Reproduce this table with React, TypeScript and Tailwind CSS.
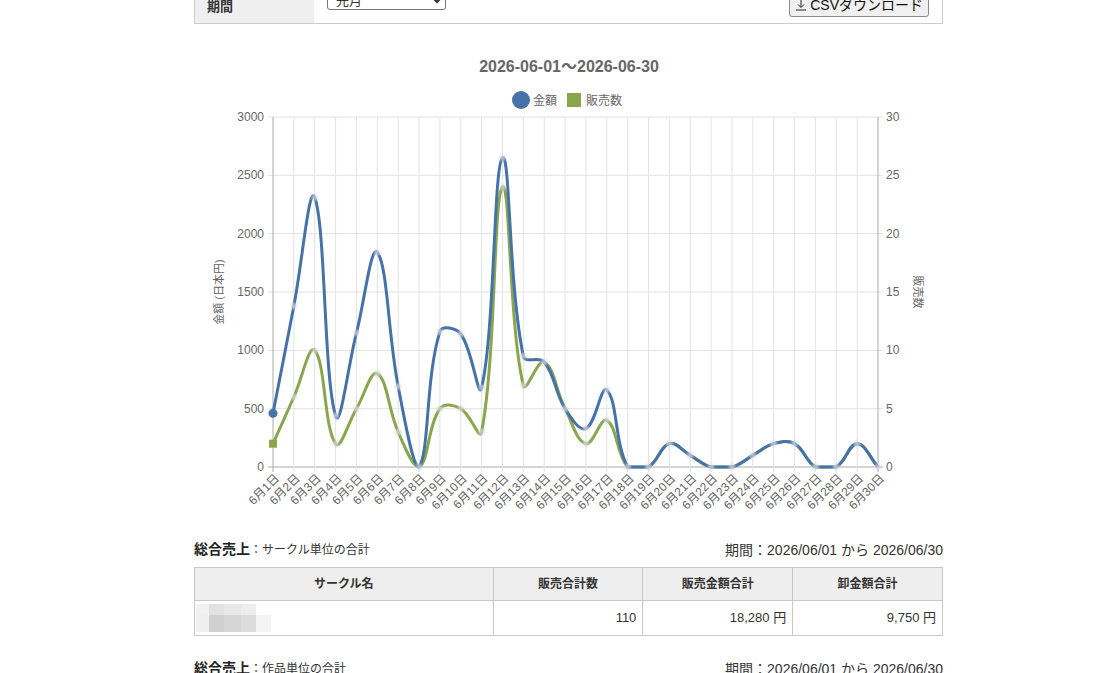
import React from "react";

const amount = [460, 1380, 2310, 440, 1150, 1840, 690, 0, 1160, 1140, 680, 2650, 950, 900, 500, 330, 660, 0, 0, 200, 100, 0, 0, 100, 200, 200, 0, 0, 200, 0];
const count = [2, 6, 10, 2, 5, 8, 3, 0, 5, 5, 3, 24, 7, 9, 5, 2, 4, 0, 0, 2, 1, 0, 0, 1, 2, 2, 0, 0, 2, 0];

// chart area in page coordinates
const LEFT = 273;
const RIGHT = 878;
const TOP = 117;
const BOTTOM = 467;
const step = (RIGHT - LEFT) / 29;

type Pt = { x: number; y: number };

const xAt = (i: number) => LEFT + i * step;

function splinePath(pts: Pt[], t = 0.4) {
  const clampY = (v: number) => Math.min(BOTTOM, Math.max(TOP, v));
  const clampX = (v: number) => Math.min(RIGHT, Math.max(LEFT, v));
  const cps = pts.map((cur, i) => {
    const prev = pts[i - 1] ?? cur;
    const next = pts[i + 1] ?? cur;
    const d01 = Math.hypot(cur.x - prev.x, cur.y - prev.y);
    const d12 = Math.hypot(next.x - cur.x, next.y - cur.y);
    let s01 = d01 / (d01 + d12);
    let s12 = d12 / (d01 + d12);
    if (isNaN(s01)) s01 = 0;
    if (isNaN(s12)) s12 = 0;
    const fa = t * s01;
    const fb = t * s12;
    return {
      p: { x: clampX(cur.x - fa * (next.x - prev.x)), y: clampY(cur.y - fa * (next.y - prev.y)) },
      n: { x: clampX(cur.x + fb * (next.x - prev.x)), y: clampY(cur.y + fb * (next.y - prev.y)) },
    };
  });
  let d = `M${pts[0].x},${pts[0].y}`;
  for (let i = 1; i < pts.length; i++) {
    const a = cps[i - 1].n;
    const b = cps[i].p;
    d += ` C${a.x},${a.y} ${b.x},${b.y} ${pts[i].x},${pts[i].y}`;
  }
  return d;
}

const amountPts = amount.map((v, i) => ({ x: xAt(i), y: BOTTOM - (v / 3000) * (BOTTOM - TOP) }));
const countPts = count.map((v, i) => ({ x: xAt(i), y: BOTTOM - (v / 30) * (BOTTOM - TOP) }));

const font = '"Liberation Sans", "Noto Sans CJK JP", sans-serif';

function SalesChart() {
  const ticks = [0, 500, 1000, 1500, 2000, 2500, 3000];
  return (
    <svg width={749} height={510} viewBox="194 24 749 510" style={{ fontFamily: font }} className="block">
      <defs>
        <filter id="soft" x="-1" y="-1" width="3" height="3">
          <feGaussianBlur stdDeviation="0.9" />
        </filter>
      </defs>
      <text x={569} y={72} textAnchor="middle" fontSize={16} fontWeight="bold" fill="#666">
        2026-06-01〜2026-06-30
      </text>

      {/* legend */}
      <circle cx={521} cy={100} r={9} fill="#4572A7" />
      <text x={533} y={104.5} fontSize={12} fill="#666">金額</text>
      <rect x={567} y={93} width={14} height={14} fill="#89A54E" />
      <text x={586} y={104.5} fontSize={12} fill="#666">販売数</text>

      {/* grid */}
      {ticks.map((v, i) => {
        const y = BOTTOM - (v / 3000) * (BOTTOM - TOP);
        return (
          <g key={v}>
            <line x1={LEFT - 5} x2={RIGHT + 5} y1={y} y2={y} stroke={i === 0 ? "#aaa" : "#e3e3e3"} />
            <text x={264} y={y + 4} textAnchor="end" fontSize={12} fill="#666">{v}</text>
            <text x={886} y={y + 4} fontSize={12} fill="#666">{v / 100}</text>
          </g>
        );
      })}
      {amount.map((_, i) => (
        <line key={i} x1={xAt(i)} x2={xAt(i)} y1={TOP} y2={BOTTOM + 5} stroke={i === 0 || i === 29 ? "#aaa" : "#e3e3e3"} />
      ))}

      <text transform="translate(223,292) rotate(-90)" textAnchor="middle" fontSize={11} fill="#666">
        金額 (日本円)
      </text>
      <text transform="translate(914,292) rotate(90)" textAnchor="middle" fontSize={11} fill="#666">
        販売数
      </text>

      {/* x labels */}
      {amount.map((_, i) => (
        <text
          key={i}
          transform={`translate(${xAt(i) + 4},${BOTTOM + 9}) rotate(-45)`}
          textAnchor="end"
          fontSize={12}
          fill="#666"
          dy="0.35em"
        >
          6月{i + 1}日
        </text>
      ))}

      {/* lines */}
      <path d={splinePath(countPts)} fill="none" stroke="#89A54E" strokeWidth={3} />
      <path d={splinePath(amountPts)} fill="none" stroke="#4572A7" strokeWidth={3} />

      {/* faint markers */}
      <g filter="url(#soft)" opacity={0.7}>
        {countPts.slice(1).map((p, i) => (
          <circle key={"c" + i} cx={p.x} cy={p.y} r={3.2} fill="#d8d8e0" />
        ))}
        {amountPts.slice(1).map((p, i) => (
          <circle key={"a" + i} cx={p.x} cy={p.y} r={3.2} fill="#d8d8e0" />
        ))}
      </g>
      <rect x={LEFT - 4} y={countPts[0].y - 4} width={8} height={8} fill="#89A54E" />
      <circle cx={LEFT} cy={amountPts[0].y} r={4.5} fill="#4572A7" />
    </svg>
  );
}

function DownloadIcon() {
  return (
    <svg width="12" height="12" viewBox="0 0 12 12" fill="none" stroke="#222" strokeWidth="1">
      <path d="M6 1v7M3 5.5l3 3 3-3M1 11h10" />
    </svg>
  );
}

function Blurred() {
  return (
    <div className="flex flex-col">
      <div className="flex h-[11px]">
        <div className="w-[13px] bg-[#f1f1f1]" />
        <div className="w-[15px] bg-[#e1e1e1]" />
        <div className="w-[17px] bg-[#e8e8e8]" />
        <div className="w-[15px] bg-[#ededed]" />
      </div>
      <div className="flex h-[17px]">
        <div className="w-[13px] bg-[#efefef]" />
        <div className="w-[15px] bg-[#d0d0d0]" />
        <div className="w-[17px] bg-[#d6d6d6]" />
        <div className="w-[15px] bg-[#dcdcdc]" />
        <div className="w-[15px] bg-[#f3f3f3]" />
      </div>
    </div>
  );
}

function SectionHeading({ sub }: { sub: string }) {
  return (
    <div className="flex items-end justify-between leading-[20px] text-[#333]">
      <div>
        <span className="text-[14px] font-bold text-[#222]">総合売上</span>
        <span className="text-[12px]">：{sub}</span>
      </div>
      <div className="text-[14px]">期間：2026/06/01 から 2026/06/30</div>
    </div>
  );
}

export default function App() {
  return (
    <div className="min-h-[673px] overflow-hidden bg-white text-[#333]" style={{ fontFamily: font }}>
      <div className="ml-[194px] w-[749px]">
        {/* period form */}
        <div className="-mt-[12px] flex h-[36px] border border-t-0 border-[#cccccc]">
          <div className="flex w-[119px] items-center bg-[#efefef] pl-[12px] pt-[2px] text-[13px] font-bold">期間</div>
          <div className="flex flex-1 items-start justify-between px-[13px]">
            <select
              defaultValue="last"
              className="mt-[3px] h-[19px] w-[119px] rounded-[3px] border border-[#767676] bg-white px-[4px] text-[13px] leading-none"
            >
              <option value="last">先月</option>
            </select>
            <button className="mt-[5px] flex h-[24px] items-center gap-[3px] rounded-[3px] border border-[#8a8a8a] bg-[#f0f0f0] px-[5px] text-[14px] font-normal text-[#111]">
              <DownloadIcon />
              CSVダウンロード
            </button>
          </div>
        </div>

        <SalesChart />

        <div className="mt-[5px]">
          <SectionHeading sub="サークル単位の合計" />
        </div>
        <table className="mt-[7px] w-full border-collapse text-[13px]">
          <thead>
            <tr className="h-[33px] bg-[#eeeeee] text-[12px] font-bold">
              <th className="w-[299px] border border-[#c8c8c8]">サークル名</th>
              <th className="w-[150px] border border-[#c8c8c8]">販売合計数</th>
              <th className="w-[150px] border border-[#c8c8c8]">販売金額合計</th>
              <th className="w-[150px] border border-[#c8c8c8]">卸金額合計</th>
            </tr>
          </thead>
          <tbody>
            <tr className="h-[35px]">
              <td className="border border-[#c8c8c8] p-0 pl-[1px]">
                <Blurred />
              </td>
              <td className="border border-[#c8c8c8] px-[6px] text-right">110</td>
              <td className="border border-[#c8c8c8] px-[6px] text-right">18,280 円</td>
              <td className="border border-[#c8c8c8] px-[6px] text-right">9,750 円</td>
            </tr>
          </tbody>
        </table>

        <div className="mt-[22px]">
          <SectionHeading sub="作品単位の合計" />
        </div>
        <table className="mt-[8px] w-full border-collapse text-[13px]">
          <thead>
            <tr className="h-[33px] bg-[#eeeeee] text-[12px] font-bold">
              <th className="border border-[#c8c8c8]">作品名</th>
              <th className="w-[150px] border border-[#c8c8c8]">販売合計数</th>
              <th className="w-[150px] border border-[#c8c8c8]">販売金額合計</th>
              <th className="w-[150px] border border-[#c8c8c8]">卸金額合計</th>
            </tr>
          </thead>
        </table>
      </div>
    </div>
  );
}
